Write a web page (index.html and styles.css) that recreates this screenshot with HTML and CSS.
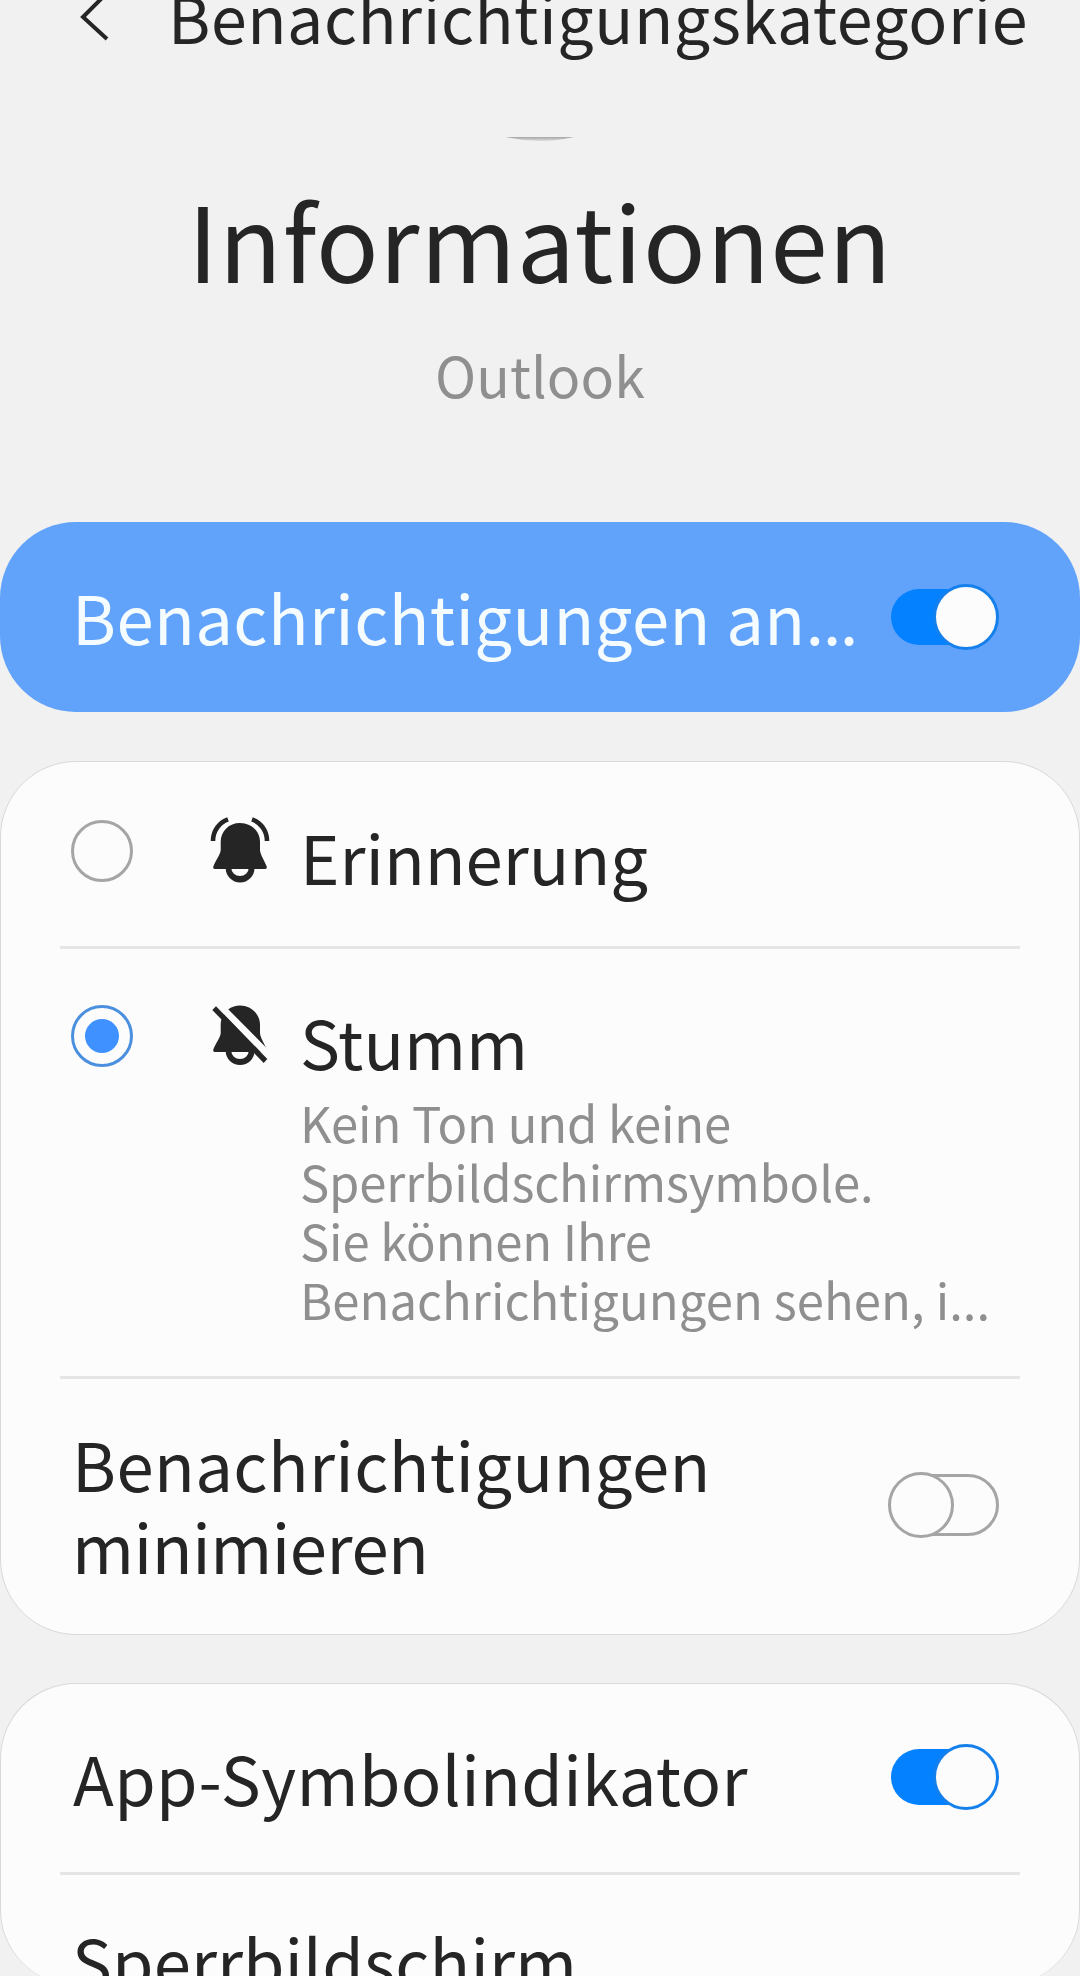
FILE: index.html
```html
<!DOCTYPE html>
<html lang="de">

<head>
    <meta charset="UTF-8">
    <meta name="viewport" content="width=device-width, initial-scale=1.0">
    <title>Benachrichtigungskategorie</title>
    <link rel="stylesheet" href="styles.css">
</head>

<body>
    <header class="header">
        <svg class="back" viewBox="0 0 32 46">
            <path d="M30 -9 L4 17 L28 39" />
        </svg>
        <h1>Benachrichtigungskategorie</h1>
    </header>

    <!-- app -->
    <section class="app">
        <svg class="app-icon" viewBox="0 0 72 6">
            <defs>
                <linearGradient id="edge" x1="0" y1="0" x2="0" y2="1">
                    <stop offset="0" stop-color="#a6a6a6" />
                    <stop offset="1" stop-color="#dedede" />
                </linearGradient>
            </defs>
            <path d="M2 0 H70 Q36 8 2 0 Z" fill="url(#edge)" />
        </svg>
        <h2>Informationen</h2>
        <p>Outlook</p>
    </section>

    <section class="master row">
        <span class="label">Benachrichtigungen an<span class="dots">...</span></span>
        <span class="toggle on"><i class="track"></i><i class="thumb"></i></span>
    </section>

    <section class="card">
        <div class="option">
            <span class="radio"></span>
            <svg class="bell" viewBox="0 0 60 70">
                <path d="M30 6 C41 6 50 14 50 25 V33 C50 37 54 43 56.5 49 Q57.5 52 55 52 H5 Q2.5 52 3.5 49 C6 43 10.7 37 10.7 33 V25 C10.7 14 19 6 30 6 Z" />
                <path d="M15.7 51 A14.4 14.4 0 0 0 44.5 51 H38.7 A8.7 8 0 0 1 21.3 51 Z" />
                <path class="wave" d="M3 24 C3 14 9 5.5 18 2.4 M57 24 C57 14 51 5.5 42 2.4" />
            </svg>
            <div class="option-text">
                <h3>Erinnerung</h3>
            </div>
        </div>
        <hr>
        <div class="option silent">
            <span class="radio checked"></span>
            <svg class="bell" viewBox="0 0 60 70">
                <path d="M30 3.5 C41 3.5 50 12 50 23 V31 C50 35 54 41 56.5 47 Q57.5 50 55 50 H5 Q2.5 50 3.5 47 C6 41 10.7 35 10.7 31 V23 C10.7 12 19 3.5 30 3.5 Z" />
                <path d="M15.7 49 A14.4 14 0 0 0 44.5 49 H38.7 A8.7 8 0 0 1 21.3 49 Z" />
                <path class="gap" d="M6 4.3 L57.3 57 L63 52.5 L12 1 Z" />
                <path d="M6 4.3 L57.3 57 L53.7 61 L2.3 8 Z" />
            </svg>
            <div class="option-text">
                <h3>Stumm</h3>
                <p>Kein Ton und keine<br>Sperrbildschirmsymbole.<br>Sie können Ihre<br><span class="wide">Benachrichtigungen sehen, i...</span></p>
            </div>
        </div>
        <hr>
        <div class="row minimize">
            <span class="label">Benachrichtigungen<br><span class="tight">minimieren</span></span>
            <span class="toggle"><i class="track"></i><i class="thumb"></i></span>
        </div>
    </section>

    <section class="card last">
        <div class="row badge">
            <span class="label">App-Symbolindikator</span>
            <span class="toggle on"><i class="track"></i><i class="thumb"></i></span>
        </div>
        <hr>
        <div class="row lock">
            <span class="label">Sperrbildschirm</span>
        </div>
    </section>
</body>

</html>
```
FILE: styles.css
```css
* {
    box-sizing: border-box;
    margin: 0;
    padding: 0;
}

body {
    width: 1080px;
    height: 1976px;
    overflow: hidden;
    background: #f1f1f1;
    color: #252525;
    font-family: "Noto Sans CJK SC", "Open Sans", sans-serif;
}

h1,
h2,
h3 {
    font-weight: 400;
    white-space: nowrap;
}

/* header */
.header {
    display: flex;
    height: 46px;
    padding-left: 79px;
}

.back {
    width: 32px;
    height: 46px;
    margin-right: 57px;
    fill: none;
    stroke: #252525;
    stroke-width: 4;
}

.header h1 {
    font-size: 64.5px;
    line-height: 33px;
    letter-spacing: 0.55px;
}

/* app */
.app {
    height: 476px;
    padding-top: 91px;
    text-align: center;
}

.app-icon {
    display: block;
    width: 72px;
    height: 6px;
    margin: 0 auto;
}

.app h2 {
    margin-top: 40px;
    font-size: 103.5px;
    line-height: 110px;
    letter-spacing: 0.7px;
}

.app p {
    margin-top: 46px;
    color: #8f8f8f;
    font-size: 55.5px;
    line-height: 70px;
    letter-spacing: 0.1px;
}

/* rows */
.row {
    display: flex;
    align-items: center;
    justify-content: space-between;
    padding: 0 81px 0 72px;
}

.label,
.option h3 {
    font-size: 67px;
    line-height: 82px;
    white-space: nowrap;
}

.label {
    margin-bottom: 3px;
    letter-spacing: 0.4px;
}

.label .tight {
    letter-spacing: -0.4px;
}

.master {
    height: 190px;
    border-radius: 76px;
    background: #61a2fb;
    color: #f5fcff;
}

.label .dots {
    letter-spacing: -1.5px;
}

.card {
    height: 874px;
    margin-top: 49px;
    border: 1px solid #d9d9d9;
    border-radius: 76px;
    background: #fcfcfc;
}

.card .row {
    padding: 0 80px 0 71px;
}

.card .toggle {
    margin-bottom: 2px;
}

hr {
    height: 3px;
    margin: 0 59px;
    border: none;
    background: #e5e5e5;
}

/* options */
.option {
    display: flex;
    height: 184px;
    padding: 52px 0 0 70px;
}

.option.silent {
    height: 427px;
    padding-top: 50px;
}

.option h3 {
    padding-top: 1px;
}

.option p {
    margin-top: 10px;
    color: #8f8f8f;
    font-size: 49px;
    line-height: 59px;
    letter-spacing: -0.15px;
    white-space: nowrap;
}

.option .wide {
    letter-spacing: 0.05px;
}

.radio {
    display: flex;
    align-items: center;
    justify-content: center;
    width: 62px;
    height: 62px;
    margin-top: 6px;
    border: 3px solid #a5a5a5;
    border-radius: 50%;
}

.radio.checked {
    border-color: #4b90df;
}

.radio.checked::before {
    content: "";
    width: 34px;
    height: 34px;
    border-radius: 50%;
    background: #3e91ff;
}

.bell {
    width: 60px;
    height: 70px;
    margin: 3px 30px 0 77px;
    fill: #252525;
}

.bell .wave {
    fill: none;
    stroke: #252525;
    stroke-width: 4.6;
}

.bell .gap {
    fill: #fcfcfc;
}

.minimize {
    height: 253px;
}

/* toggle */
.toggle {
    position: relative;
    width: 111px;
    height: 66px;
    padding: 2px 0 2px 1px;
}

.track {
    display: block;
    height: 62px;
    border: 3px solid #a5a5a5;
    border-radius: 31px;
}

.thumb {
    position: absolute;
    top: 0;
    left: 0;
    width: 66px;
    height: 66px;
    border: 3px solid #a5a5a5;
    border-radius: 50%;
    background: #fcfcfc;
}

.toggle.on {
    padding: 5px 2px 5px 3px;
}

.on .track {
    height: 56px;
    border: none;
    background: #0381fe;
}

.on .thumb {
    right: 0;
    left: auto;
    border-color: #1580ec;
}

/* last card runs off the screen */
.card.last {
    height: 301px;
    margin-top: 48px;
    border-bottom: none;
    border-bottom-left-radius: 74px;
    border-bottom-right-radius: 74px;
}

.badge {
    height: 188px;
}

.card .badge {
    padding-left: 72px;
}

.card .lock {
    align-items: flex-start;
    padding-top: 44px;
}

.lock .label {
    letter-spacing: 0.1px;
}
```
